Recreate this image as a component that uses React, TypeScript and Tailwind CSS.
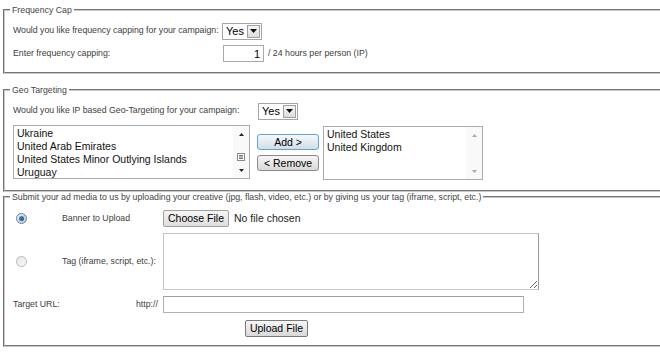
import React from "react";

function Select() {
  return (
    <div className="flex items-center h-[17px] w-[40px] border border-[#a5a5a5] bg-white">
      <span className="flex-1 pl-[3px] text-[11px] leading-[15px] text-black">Yes</span>
      <div className="mr-[1px] flex h-[13px] w-[13px] items-center justify-center border border-[#a0a0a0] bg-gradient-to-b from-[#f6f6f6] to-[#dcdcdc]">
        <svg width="7" height="4" viewBox="0 0 7 4">
          <path d="M0 0h7L3.5 4z" fill="#111" />
        </svg>
      </div>
    </div>
  );
}

function ScrollBar({ active }: { active: boolean }) {
  const c = active ? "#222" : "#a8a8a8";
  return (
    <div className="flex w-[16px] flex-col bg-[#f9f9f9]">
      <div className="flex h-[16px] items-center justify-center">
        <svg width="5" height="3" viewBox="0 0 5 3">
          <path d="M2.5 0L5 3H0z" fill={c} />
        </svg>
      </div>
      <div className="flex flex-1 flex-col items-center justify-end pb-[1px]">
        {active && (
          <svg width="8" height="8" viewBox="0 0 8 8">
            <rect x="0.5" y="0.5" width="7" height="7" fill="#fbfbfb" stroke="#8a8a8a" />
            <path d="M2 2.5h4M2 4h4M2 5.5h4" stroke="#555" strokeWidth="0.8" />
          </svg>
        )}
      </div>
      <div className="flex h-[16px] items-center justify-center">
        <svg width="5" height="3" viewBox="0 0 5 3">
          <path d="M0 0h5L2.5 3z" fill={c} />
        </svg>
      </div>
    </div>
  );
}

function ListBox({ items, active, className }: { items: string[]; active: boolean; className: string }) {
  return (
    <div className={"flex h-[54px] overflow-hidden border border-[#a5acb5] bg-white " + className}>
      <div className="flex-1 overflow-hidden pl-[3px] pt-[1px]">
        {items.map((t) => (
          <div key={t} className="h-[13px] whitespace-nowrap text-[10.5px] leading-[13px] text-[#111]">
            {t}
          </div>
        ))}
      </div>
      <ScrollBar active={active} />
    </div>
  );
}

function Radio({ checked }: { checked: boolean }) {
  return checked ? (
    <div className="flex h-[11px] w-[11px] items-center justify-center rounded-full border border-[#6f7f8f] bg-gradient-to-br from-[#e6eef6] to-[#b9c8d8]">
      <div className="h-[5px] w-[5px] rounded-full bg-gradient-to-br from-[#4a8ad0] to-[#1c4f8a]" />
    </div>
  ) : (
    <div className="h-[11px] w-[11px] rounded-full border border-[#b8b8b8] bg-gradient-to-br from-[#e8e8e8] to-[#f8f8f8]" />
  );
}

const fs =
  "ml-[3px] w-[720px] border-2 [border-style:groove] border-[#c8c8c8] pl-[8px] pr-0";
const lg = "ml-[-3px] px-[2px] text-[8.75px] leading-[12px] text-[#444]";

export default function App() {
  return (
    <div className="h-[360px] w-[660px] overflow-hidden bg-white text-[8.75px] text-[#404040] font-['Liberation_Sans',Arial,sans-serif]">
      {/* Frequency Cap */}
      <fieldset className={fs + " mt-[4px] pt-[6px] pb-[10px]"}>
        <legend className={lg}>Frequency Cap</legend>
        <div className="flex h-[18px] items-center">
          <div className="w-[209px]">Would you like frequency capping for your campaign:</div>
          <Select />
        </div>
        <div className="mt-[5px] flex h-[17px] items-center">
          <div className="w-[210px]">Enter frequency capping:</div>
          <input
            readOnly
            defaultValue="1"
            className="h-[17px] w-[41px] border border-[#a9a9a9] pr-[3px] text-right text-[11px] text-black outline-none"
          />
          <span className="ml-[4px]">/ 24 hours per person (IP)</span>
        </div>
      </fieldset>

      {/* Geo Targeting */}
      <fieldset className={fs + " mt-[10px] pt-[6px] pb-[10px]"}>
        <legend className={lg}>Geo Targeting</legend>
        <div className="flex h-[18px] items-center">
          <div className="w-[245px]">Would you like IP based Geo-Targeting for your campaign:</div>
          <Select />
        </div>
        <div className="mt-[5px] flex items-start">
          <ListBox
            className="w-[237px]"
            active
            items={["Ukraine", "United Arab Emirates", "United States Minor Outlying Islands", "Uruguay"]}
          />
          <div className="ml-[7px] mt-[9px] flex w-[62px] flex-col gap-[5px]">
            <button className="h-[16px] rounded-[3px] border border-[#5fa6d6] bg-gradient-to-b from-[#f4f8fb] to-[#d4dde5] text-[10.5px] leading-[14px] text-black">
              Add &gt;
            </button>
            <button className="h-[16px] rounded-[3px] border border-[#8a8a8a] bg-gradient-to-b from-[#f6f6f6] to-[#d9d9d9] text-[10.5px] leading-[14px] text-black">
              &lt; Remove
            </button>
          </div>
          <ListBox className="ml-[4px] mt-[1px] w-[160px]" active={false} items={["United States", "United Kingdom"]} />
        </div>
      </fieldset>

      {/* Upload */}
      <fieldset className={fs + " mt-[-1px] pt-[7px] pb-[8px]"}>
        <legend className={lg}>
          Submit your ad media to us by uploading your creative (jpg, flash, video, etc.) or by giving us your tag (iframe, script, etc.)
        </legend>
        <div className="flex h-[17px] items-center">
          <div className="w-[49px] pl-[3px]">
            <Radio checked />
          </div>
          <div className="w-[101px]">Banner to Upload</div>
          <button className="h-[17px] w-[66px] rounded-[2px] border border-[#a0a0a0] bg-gradient-to-b from-[#f6f6f6] to-[#dedede] text-[10.5px] leading-[15px] text-black">
            Choose File
          </button>
          <span className="ml-[5px] text-[10.5px] text-[#222]">No file chosen</span>
        </div>
        <div className="mt-[6px] flex items-center">
          <div className="w-[49px] pl-[3px]">
            <Radio checked={false} />
          </div>
          <div className="w-[101px]">Tag (iframe, script, etc.):</div>
          <textarea
            readOnly
            className="h-[57px] w-[376px] border border-[#c4c4c4] border-r-[#9c9c9c] border-b-[#c8c8c8] outline-none"
          />
        </div>
        <div className="mt-[6px] flex h-[17px] items-center">
          <div className="w-[123px]">Target URL:</div>
          <div className="w-[27px]">http://</div>
          <input
            readOnly
            className="h-[17px] w-[361px] border border-[#b0b0b0] border-t-[#a0a0a0] outline-none"
          />
        </div>
        <div className="mt-[7px] flex">
          <button className="ml-[232px] h-[17px] w-[63px] rounded-[2px] border border-[#7a7a7a] bg-gradient-to-b from-[#f6f6f6] to-[#d9d9d9] text-[10.5px] leading-[15px] text-black">
            Upload File
          </button>
        </div>
      </fieldset>
    </div>
  );
}
